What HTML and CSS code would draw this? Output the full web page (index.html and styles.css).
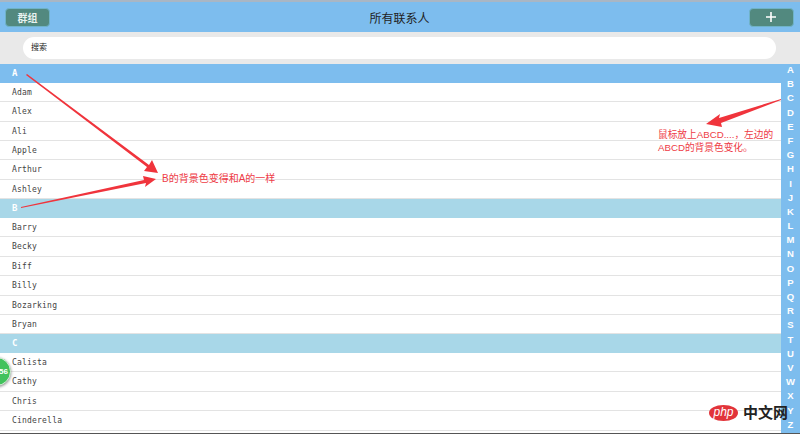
FILE: index.html
```html
<!DOCTYPE html>
<html lang="zh">
<head>
<meta charset="utf-8">
<title>所有联系人</title>
<link rel="stylesheet" href="styles.css">
</head>
<body>
<div class="app">
  <header class="top">
    <button class="btn">群组</button>
    <h1>所有联系人</h1>
    <button class="btn btn-add"><svg width="12" height="12" viewBox="0 0 12 12"><path d="M6 1v10M1 6h10" stroke="#fff" stroke-width="1.6" fill="none"/></svg></button>
  </header>
  <div class="search"><div class="search-box">搜索</div></div>
  <div class="body">
    <div class="list">
      <div class="sec sec-a">A</div>
      <div class="row">Adam</div><div class="row">Alex</div><div class="row">Ali</div><div class="row">Apple</div><div class="row">Arthur</div><div class="row">Ashley</div>
      <div class="sec">B</div>
      <div class="row">Barry</div><div class="row">Becky</div><div class="row">Biff</div><div class="row">Billy</div><div class="row">Bozarking</div><div class="row">Bryan</div>
      <div class="sec">C</div>
      <div class="row">Calista</div><div class="row">Cathy</div><div class="row">Chris</div><div class="row">Cinderella</div>
    </div>
    <nav class="index">
      <span>A</span><span>B</span><span>C</span><span>D</span><span>E</span><span>F</span><span>G</span><span>H</span><span>I</span><span>J</span><span>K</span><span>L</span><span>M</span><span>N</span><span>O</span><span>P</span><span>Q</span><span>R</span><span>S</span><span>T</span><span>U</span><span>V</span><span>W</span><span>X</span><span>Y</span><span>Z</span>
    </nav>
  </div>
  <svg class="arrows" width="800" height="434" viewBox="0 0 800 434">
    <g fill="#f0343c">
      <path d="M27 74 L149 165 L152 160 L158 173 L144 171 L147 167 L26 75Z"/>
      <path d="M21 208 L146 183 L145 187 L156 179 L143 176 L144 180 L21 207Z"/>
      <path d="M781 99 L719 118 L720 114 L706 124 L722 127 L721 123 L781 100Z"/>
    </g>
  </svg>
  <div class="note note-b">B的背景色变得和A的一样</div>
  <div class="note note-abcd">鼠标放上ABCD....，左边的<br>ABCD的背景色变化。</div>
  <div class="badge">56</div>
  <div class="mark"><span class="mark-logo">php</span><span class="mark-text">中文网</span></div>
</div>
</body>
</html>
```
FILE: styles.css
```css
* { box-sizing: border-box; }
html, body { margin: 0; padding: 0; }
body { width: 800px; height: 434px; overflow: hidden; background: #fff; font-family: "Liberation Sans", "Noto Sans CJK SC", sans-serif; }
.app { position: relative; width: 800px; height: 434px; overflow: hidden; border-top: 2px solid #a9b6c4; border-bottom: 1px solid #555; }
.top { height: 30px; background: #7dbdee; display: flex; align-items: center; justify-content: space-between; padding: 0 6px 0 5px; }
.top h1 { margin: 0; font-size: 12px; font-weight: normal; color: #222; }
.btn { width: 45px; height: 19px; padding: 0; border: 1px solid #6fb3c8; border-radius: 4px; background: #52897f; color: #e8f2f0; font-size: 10px; font-weight: bold; font-family: inherit; display: flex; align-items: center; justify-content: center; }
.search { height: 32px; background: #e9e9e9; padding: 5px 24px 5px 23px; }
.search-box { height: 22px; background: #fff; border-radius: 11px; font-size: 8px; line-height: 22px; padding-left: 8px; color: #222; }
.body { display: flex; height: 369px; }
.list { flex: 1; min-width: 0; }
.sec { height: 18.8px; background: #a8d7e8; color: #fff; font: bold 9px/19px "DejaVu Sans Mono", monospace; padding-left: 12px; }
.sec-a { background: #7dbdee; }
.row { height: 19.4px; border-bottom: 1px solid #e3e3e3; background: #fff; color: #444; font: 8px/19px "DejaVu Sans Mono", monospace; letter-spacing: 0.2px; padding-left: 12px; }
.index { width: 19px; background: #7dbdee; color: #fff; display: flex; flex-direction: column; align-items: center; font: 9.5px/12.2px "Liberation Sans Narrow", "Liberation Sans", sans-serif; font-weight: bold; }
.index span { display: block; height: 14.2px; }
.arrows { position: absolute; left: 0; top: -2px; }
.note { position: absolute; color: #ee3b46; font-size: 10px; line-height: 13px; }
.note-b { left: 162px; top: 170px; }
.note-abcd { left: 658px; top: 126px; font-size: 9.7px; }
.badge { position: absolute; left: -18px; top: 355px; width: 29px; height: 29px; border-radius: 50%; background: #42c25c; border: 1px solid #d9f0dc; box-shadow: 0 1px 3px #888; color: #fff; font: bold 8px/27px "Liberation Sans", sans-serif; text-align: right; padding-right: 2px; }
.mark { position: absolute; left: 709px; top: 402px; display: flex; align-items: center; gap: 5px; }
.mark-logo { width: 29px; height: 16px; border-radius: 50%; background: #e2343a; color: #fff; font: italic 12px/14px "Liberation Sans", sans-serif; text-align: center; }
.mark-text { font-size: 15px; font-weight: bold; line-height: 18px; color: #222; }
```
